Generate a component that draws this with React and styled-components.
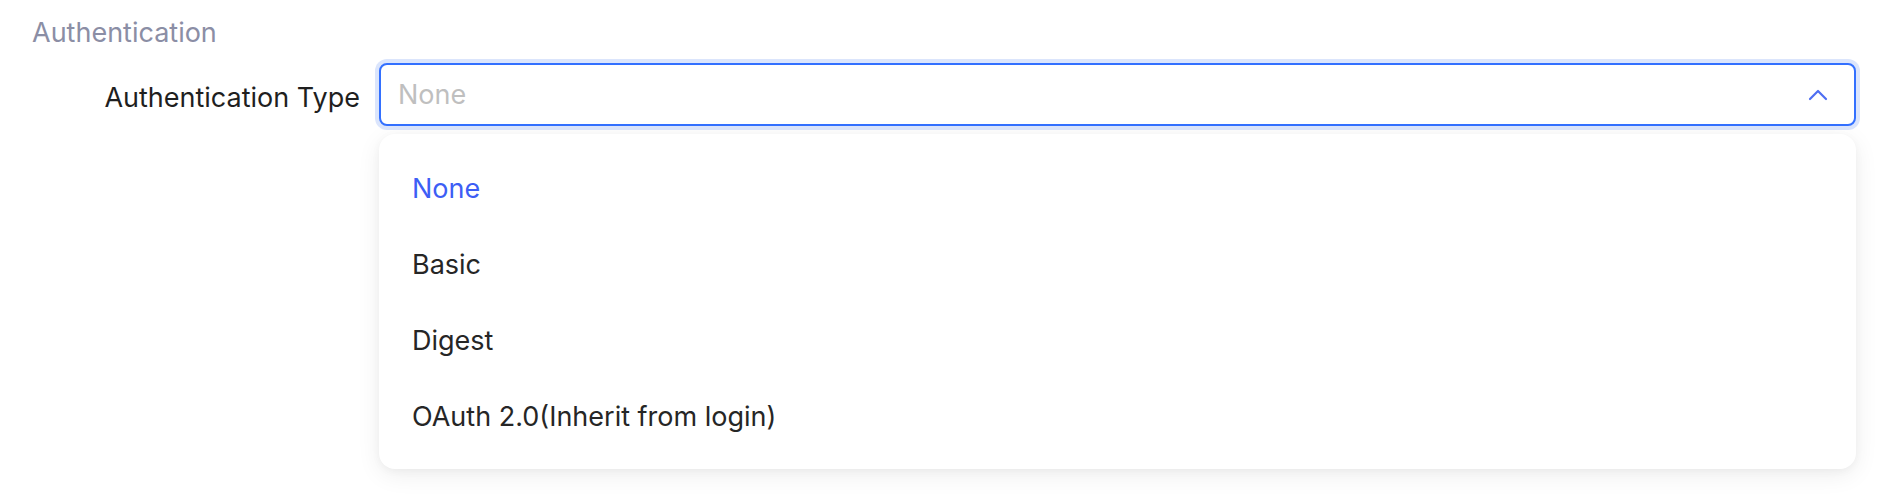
import styled, { createGlobalStyle } from 'styled-components'

const GlobalStyle = createGlobalStyle`
  body {
    margin: 0;
    background: #ffffff;
    font-family: Inter, "Noto Sans", sans-serif;
  }
`

const Page = styled.div`
  height: 500px;
  padding: 0 40px 0 32px;
  box-sizing: border-box;
`

const SectionTitle = styled.div`
  color: #8b8ea5;
  font-size: 27px;
  line-height: 34px;
  padding-top: 16px;
`

const FieldRow = styled.div`
  display: grid;
  grid-template-columns: 328px 1fr;
  column-gap: 19px;
  align-items: center;
  margin-top: 13px;
`

const Label = styled.label`
  color: #1f1f1f;
  font-size: 27px;
  text-align: right;
  padding-top: 5px;
  white-space: nowrap;
`

const SelectWrap = styled.div`
  position: relative;
`

const SelectBox = styled.div`
  display: flex;
  align-items: center;
  justify-content: space-between;
  height: 63px;
  box-sizing: border-box;
  padding: 0 26px 0 17px;
  border: 2px solid #3370ff;
  border-radius: 8px;
  box-shadow: 0 0 0 4px #dbe5fc;
  background: #fff;
`

const Placeholder = styled.span`
  color: #bfbfbf;
  font-size: 27px;
`

const Menu = styled.ul`
  position: absolute;
  top: 71px;
  left: 0;
  right: 0;
  margin: 0;
  padding: 16px 0 15px;
  list-style: none;
  background: #fff;
  border-radius: 16px;
  box-shadow: 0 6px 24px rgba(0, 0, 0, 0.07), 0 2px 8px rgba(0, 0, 0, 0.04);
`

const Option = styled.li`
  height: 76px;
  display: flex;
  align-items: center;
  padding: 0 33px;
  font-size: 27px;
  color: ${({ $active }) => ($active ? '#3d5ef5' : '#262626')};
`

const options = ['None', 'Basic', 'Digest', 'OAuth 2.0(Inherit from login)']

export default function App() {
  return (
    <Page>
      <GlobalStyle />
      <SectionTitle>Authentication</SectionTitle>
      <FieldRow>
        <Label>Authentication Type</Label>
        <SelectWrap>
          <SelectBox>
            <Placeholder>None</Placeholder>
            <svg width="20" height="12" viewBox="0 0 20 12" fill="none">
              <path
                d="M2 10 L10 2 L18 10"
                stroke="#4e6ef2"
                strokeWidth="2.2"
                strokeLinecap="round"
                strokeLinejoin="round"
              />
            </svg>
          </SelectBox>
          <Menu>
            {options.map((o, i) => (
              <Option key={o} $active={i === 0}>
                {o}
              </Option>
            ))}
          </Menu>
        </SelectWrap>
      </FieldRow>
    </Page>
  )
}
